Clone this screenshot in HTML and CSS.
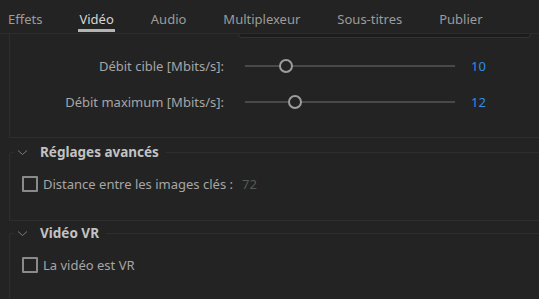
FILE: index.html
```html
<!DOCTYPE html>
<html lang="fr">
<head>
    <meta charset="UTF-8">
    <title>Exporter - Vidéo</title>
    <link rel="stylesheet" href="styles.css">
</head>
<body>
    <nav class="tabs">
        <span class="tab">Effets</span>
        <span class="tab active">Vidéo</span>
        <span class="tab">Audio</span>
        <span class="tab">Multiplexeur</span>
        <span class="tab">Sous-titres</span>
        <span class="tab">Publier</span>
    </nav>

    <div class="scroller">
        <div class="panel bitrate">
            <div class="dropdown-edge"></div>
            <div class="slider-row first">
                <label class="slider-label">Débit cible [Mbits/s]:</label>
                <div class="track"><span class="knob" style="left: 41px"></span></div>
                <span class="slider-value">10</span>
            </div>
            <div class="slider-row">
                <label class="slider-label">Débit maximum [Mbits/s]:</label>
                <div class="track"><span class="knob" style="left: 50px"></span></div>
                <span class="slider-value">12</span>
            </div>
        </div>

        <fieldset class="section">
            <legend class="section-title">
                <svg class="chevron" width="11" height="7" viewBox="0 0 11 7"><path d="M1 1.5 L5.5 5.5 L10 1.5" fill="none" stroke="#7a7a7a" stroke-width="1"/></svg>
                Réglages avancés
            </legend>
            <label class="check">
                <span class="box"></span>
                Distance entre les images clés :
                <span class="dim">72</span>
            </label>
        </fieldset>

        <fieldset class="section last">
            <legend class="section-title">
                <svg class="chevron" width="11" height="7" viewBox="0 0 11 7"><path d="M1 1.5 L5.5 5.5 L10 1.5" fill="none" stroke="#7a7a7a" stroke-width="1"/></svg>
                Vidéo VR
            </legend>
            <label class="check">
                <span class="box"></span>
                La vidéo est VR
            </label>
        </fieldset>
    </div>
</body>
</html>
```

FILE: styles.css
```css
body {
    margin: 0;
    background-color: #232323;
    font-family: 'Noto Sans', 'Open Sans', sans-serif;
    font-size: 12px;
    color: #a9a9a9;
    overflow: hidden;
    height: 299px;
}

.tabs {
    display: flex;
    gap: 37px;
    height: 34px;
    padding-left: 8px;
    border-bottom: 1px solid #2c2c2c;
    box-sizing: border-box;
}

.tab {
    position: relative;
    line-height: 38px;
    font-size: 13px;
    color: #9c9c9c;
}

.tab.active {
    color: #d6d6d6;
}

.tab.active::after {
    content: "";
    position: absolute;
    left: -1px;
    right: -1px;
    bottom: 1px;
    height: 3px;
    background-color: #b4b4b4;
}

.panel {
    margin-left: 9px;
    border-left: 1px solid #2e2e2e;
    border-bottom: 1px solid #2e2e2e;
}

.bitrate {
    height: 104px;
    box-sizing: border-box;
}

.dropdown-edge {
    margin-left: 228px;
    width: 291px;
    height: 3px;
    background-color: #1c1c1c;
    border: 1px solid #333;
    border-top: none;
    border-radius: 0 0 4px 4px;
}

.slider-row {
    display: grid;
    grid-template-columns: 214px 210px auto;
    column-gap: 16px;
    align-items: center;
    height: 36px;
}

.slider-row.first {
    margin-top: 10px;
}

.slider-label {
    text-align: right;
    font-size: 13px;
    color: #a6a6a6;
}

.track {
    position: relative;
    height: 2px;
    margin-left: 5px;
    margin-right: -5px;
    background-color: #494949;
}

.knob {
    position: absolute;
    top: -6px;
    width: 10px;
    height: 10px;
    margin-left: -7px;
    border: 2px solid #9d9d9d;
    border-radius: 50%;
    background-color: #232323;
}

.slider-value {
    margin-left: 5px;
    font-size: 13px;
    color: #2f8de4;
}

.section {
    margin: 5px 0 0 9px;
    padding: 0 0 0 12px;
    border: 1px solid #2e2e2e;
    border-right: none;
    border-radius: 3px 0 0 0;
    height: 78px;
    box-sizing: border-box;
}

.section.last {
    margin-top: 3px;
    height: 80px;
}

.section-title {
    display: flex;
    align-items: center;
    padding: 0 7px 0 3px;
    margin-left: -8px;
    font-size: 13.5px;
    font-weight: bold;
    color: #c2c2c2;
}

.chevron {
    margin-right: 12px;
}

.check {
    display: flex;
    align-items: center;
    gap: 5px;
    margin-top: 14px;
    font-size: 13px;
    color: #a6a6a6;
}

.box {
    width: 12px;
    height: 12px;
    border: 2px solid #8a8a8a;
    border-radius: 1px;
}

.dim {
    margin-left: 4px;
    color: #585858;
}
```
